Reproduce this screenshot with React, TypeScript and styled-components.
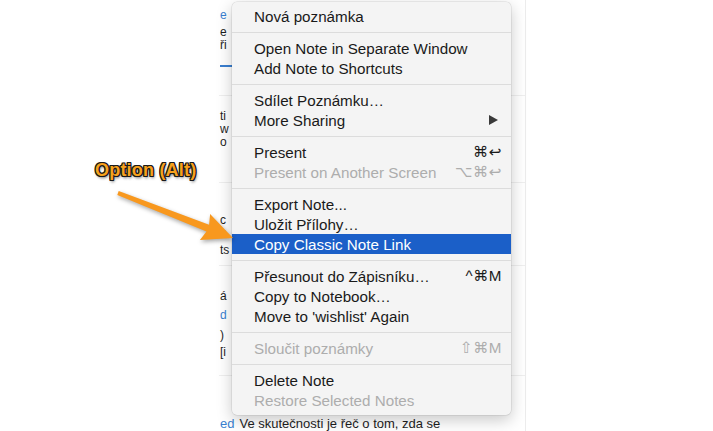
import * as React from "react";
import styled, { createGlobalStyle } from "styled-components";

const GlobalStyle = createGlobalStyle`
  *, *::before, *::after { box-sizing: border-box; }
  html, body { margin: 0; padding: 0; background: #fff; }
  body {
    font-family: "Liberation Sans", Arial, "DejaVu Sans", sans-serif;
    -webkit-font-smoothing: antialiased;
  }
`;

const Page = styled.div`
  position: relative;
  display: flex;
  width: 713px;
  height: 431px;
  overflow: hidden;
  background: #fff;
`;

const Gutter = styled.div`
  flex: none;
  width: 219px;
`;

const NoteList = styled.div`
  flex: none;
  display: flex;
  flex-direction: column;
  width: 307px;
  border-right: 1px solid #ececec;
  overflow: hidden;
  font-size: 12px;
  color: #1e1e1e;
`;

const Note = styled.div<{ $h?: number; $pt: number }>`
  flex: ${(p) => (p.$h ? "none" : "1")};
  height: ${(p) => (p.$h ? `${p.$h}px` : "auto")};
  padding: ${(p) => p.$pt}px 0 0 1px;
  border-top: 1px solid #efefef;
  &:first-child {
    border-top: none;
  }
`;

const Line = styled.div<{ $mt?: number; $blue?: boolean }>`
  margin-top: ${(p) => p.$mt ?? 0}px;
  line-height: 13px;
  height: 13px;
  white-space: nowrap;
  color: ${(p) => (p.$blue ? "#3a7fd0" : "#1e1e1e")};
`;

const Lead = styled.div`
  line-height: 14px;
  font-size: 13px;
  white-space: nowrap;
`;

const Tag = styled.span`
  color: #3a7fd0;
  margin-right: 5px;
`;

const Bar = styled.div<{ $mt: number }>`
  margin-top: ${(p) => p.$mt}px;
  width: 14px;
  height: 2px;
  background: #3a7fd0;
`;

const Menu = styled.div`
  position: absolute;
  left: 232px;
  top: 2px;
  width: 279px;
  padding: 4px 0 5px;
  background: #f4f4f4;
  border-radius: 5px;
  box-shadow: 0 0 0 0.5px rgba(0, 0, 0, 0.12), 0 5px 16px rgba(0, 0, 0, 0.22);
  font-size: 15.2px;
`;

const Item = styled.div<{ $disabled?: boolean; $active?: boolean }>`
  display: flex;
  align-items: center;
  height: 20px;
  padding: 0 9px 0 22px;
  white-space: nowrap;
  color: ${(p) => (p.$active ? "#fff" : p.$disabled ? "#adadad" : "#1a1a1a")};
  background: ${(p) => (p.$active ? "#1b5fc8" : "transparent")};
`;

const Shortcut = styled.span`
  margin-left: auto;
  font-family: "Liberation Sans", "DejaVu Sans", sans-serif;
  letter-spacing: 0.5px;
`;

const SubArrow = styled.svg`
  margin-left: auto;
  margin-right: 4px;
`;

const Separator = styled.div`
  height: 1px;
  margin: 6px 0 5px;
  background: #dcdcdc;
`;

const Callout = styled.div`
  position: absolute;
  left: 95px;
  top: 160px;
  font-size: 18px;
  font-weight: bold;
  color: #f7a11c;
  letter-spacing: 0.2px;
  text-shadow: 1px 0 0 #1a1a1a, -1px 0 0 #1a1a1a, 0 1px 0 #1a1a1a, 0 -1px 0 #1a1a1a,
    1px 1px 0 #1a1a1a, -1px -1px 0 #1a1a1a, 1px -1px 0 #1a1a1a, -1px 1px 0 #1a1a1a,
    1px 2px 3px rgba(0, 0, 0, 0.6);
`;

const Arrow = styled.svg`
  position: absolute;
  left: 100px;
  top: 180px;
  overflow: visible;
  filter: drop-shadow(1px 2px 2px rgba(0, 0, 0, 0.35));
`;

type Entry =
  | { kind: "sep" }
  | {
      kind: "item";
      label: string;
      shortcut?: string;
      disabled?: boolean;
      active?: boolean;
      submenu?: boolean;
    };

const entries: Entry[] = [
  { kind: "item", label: "Nová poznámka" },
  { kind: "sep" },
  { kind: "item", label: "Open Note in Separate Window" },
  { kind: "item", label: "Add Note to Shortcuts" },
  { kind: "sep" },
  { kind: "item", label: "Sdílet Poznámku…" },
  { kind: "item", label: "More Sharing", submenu: true },
  { kind: "sep" },
  { kind: "item", label: "Present", shortcut: "⌘↩" },
  { kind: "item", label: "Present on Another Screen", shortcut: "⌥⌘↩", disabled: true },
  { kind: "sep" },
  { kind: "item", label: "Export Note..." },
  { kind: "item", label: "Uložit Přílohy…" },
  { kind: "item", label: "Copy Classic Note Link", active: true },
  { kind: "sep" },
  { kind: "item", label: "Přesunout do Zápisníku…", shortcut: "^⌘M" },
  { kind: "item", label: "Copy to Notebook…" },
  { kind: "item", label: "Move to 'wishlist' Again" },
  { kind: "sep" },
  { kind: "item", label: "Sloučit poznámky", shortcut: "⇧⌘M", disabled: true },
  { kind: "sep" },
  { kind: "item", label: "Delete Note" },
  { kind: "item", label: "Restore Selected Notes", disabled: true },
];

const App = (): JSX.Element => {
  return (
    <>
      <GlobalStyle />
      <Page>
        <Gutter />
        <NoteList>
          <Note $h={95} $pt={9}>
            <Line $blue>e</Line>
            <Line $mt={4}>e</Line>
            <Line>ři</Line>
            <Bar $mt={13} />
          </Note>
          <Note $h={87} $pt={14}>
            <Line>ti</Line>
            <Line>w</Line>
            <Line>o</Line>
          </Note>
          <Note $h={83} $pt={31}>
            <Line>c</Line>
            <Line>e</Line>
            <Line $mt={4}>ts</Line>
          </Note>
          <Note $h={110} $pt={24}>
            <Line>á</Line>
            <Line $mt={6} $blue>
              d
            </Line>
            <Line $mt={7}>)</Line>
            <Line $mt={4}>[i</Line>
          </Note>
          <Note $pt={41}>
            <Lead>
              <Tag>ed</Tag>Ve skutečnosti je řeč o tom, zda se
            </Lead>
          </Note>
        </NoteList>

        <Menu>
          {entries.map((e, i) =>
            e.kind === "sep" ? (
              <Separator key={i} />
            ) : (
              <Item key={i} $disabled={e.disabled} $active={e.active}>
                {e.label}
                {e.shortcut && <Shortcut>{e.shortcut}</Shortcut>}
                {e.submenu && (
                  <SubArrow width="9" height="10" viewBox="0 0 9 10">
                    <polygon points="0,0 9,5 0,10" fill="#3a3a3a" />
                  </SubArrow>
                )}
              </Item>
            )
          )}
        </Menu>

        <Callout>Option (Alt)</Callout>
        <Arrow width="145" height="75" viewBox="100 180 145 75">
          <polygon
            points="118.7,191.1 209.1,224.8 210.1,214 233,238 199.9,240 206.5,231.4 117.3,194.9"
            fill="#f8981e"
          />
        </Arrow>
      </Page>
    </>
  );
};

export default App;
